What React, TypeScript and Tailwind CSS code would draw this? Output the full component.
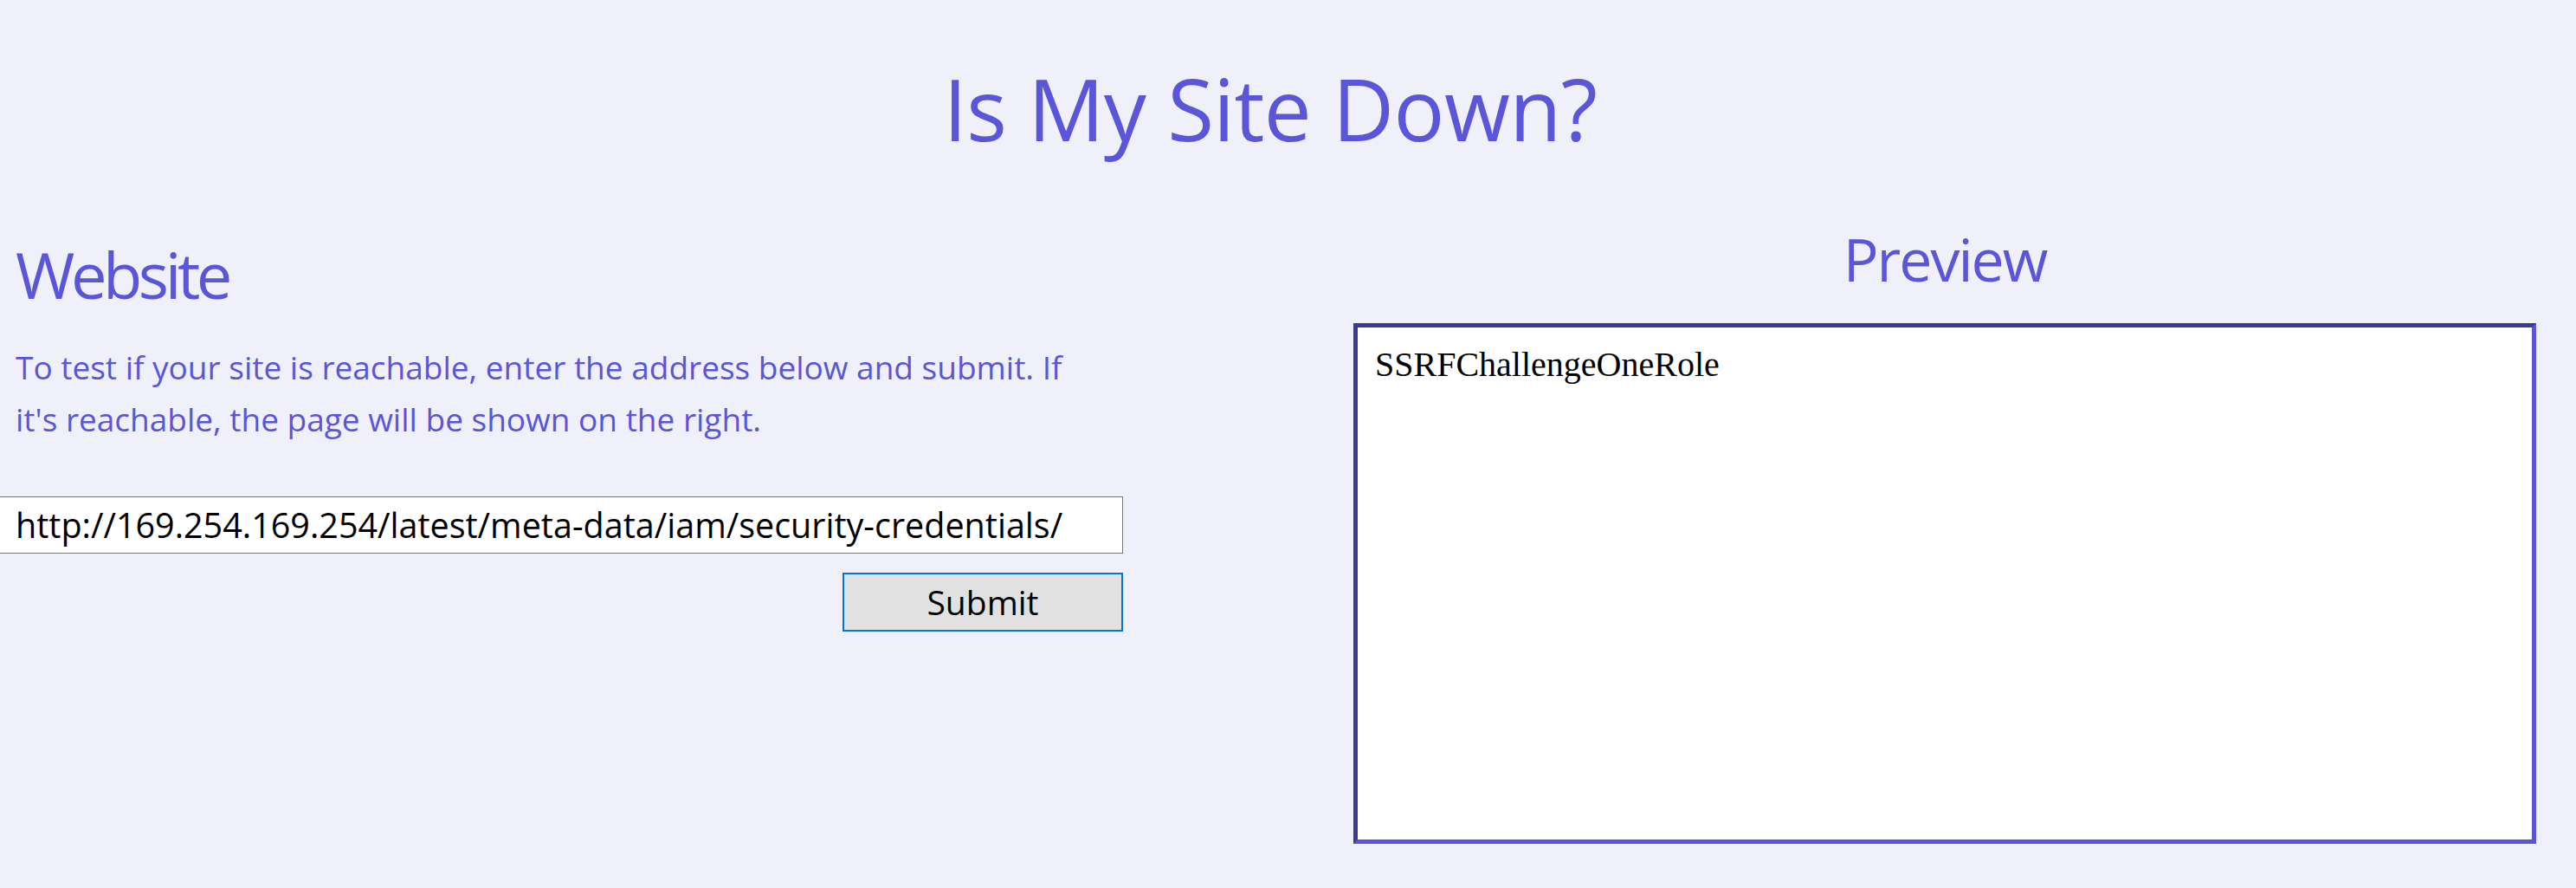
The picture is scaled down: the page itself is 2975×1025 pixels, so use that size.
import React from "react";

function App() {
  return (
    <div className="min-h-screen w-full bg-[#f0f0fa] text-[#5a55d9] font-['Segoe_UI','Open_Sans',sans-serif]">
      <h1 className="pt-[60px] pr-[41px] text-center text-[98px] leading-[130px] font-normal tracking-[-0.006em]">Is My Site Down?</h1>

      <div className="flex mt-[59px]">
        <div className="w-[1297px] flex flex-col">
          <h2 className="mt-[18px] pl-[18px] text-[74px] leading-[100px] font-normal tracking-[-0.06em]">Website</h2>
          <p className="mt-[27px] pl-[18px] pr-[40px] text-[37px] leading-[60px]">
            To test if your site is reachable, enter the address below and submit. If it's reachable, the page will be shown on the right.
          </p>
          <input
            className="mt-[59px] h-[66px] w-full bg-white border border-l-0 border-[#767676] pl-[18px] text-[39.5px] text-black outline-none"
            defaultValue="http://169.254.169.254/latest/meta-data/iam/security-credentials/"
          />
          <div className="flex justify-end mt-[22px]">
            <button className="w-[324px] h-[68px] bg-[#e1e1e1] border-2 border-[#0078d7] text-[39px] text-black">
              Submit
            </button>
          </div>
        </div>

        <div className="ml-[266px] w-[1366px] flex flex-col">
          <h2 className="text-center text-[68px] leading-[100px] font-normal tracking-[-0.03em]">Preview</h2>
          <div className="mt-[24px] h-[601px] bg-white border-[5px] border-t-[#3c3a96] border-l-[#3c3a96] border-r-[#5a55d9] border-b-[#5a55d9] px-[20px] pt-[13px]">
            <p className="font-['Liberation_Serif',serif] text-[40px] text-black">SSRFChallengeOneRole</p>
          </div>
        </div>
      </div>
    </div>
  );
}

export default App;
